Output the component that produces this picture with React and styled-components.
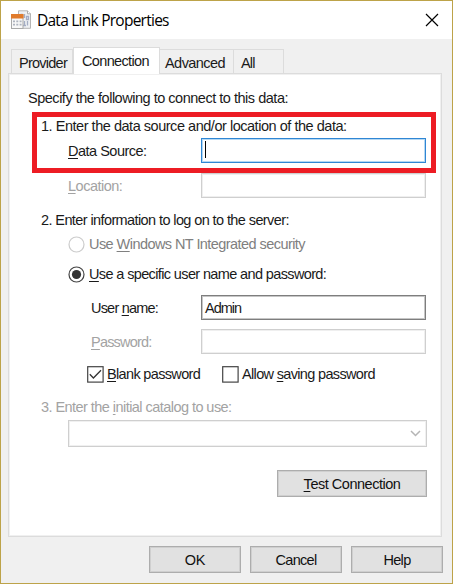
import React from 'react';
import styled, { createGlobalStyle } from 'styled-components';

const Global = createGlobalStyle`
  * { box-sizing: border-box; }
  body { margin: 0; background: #f0f0f0; }
`;

const Dialog = styled.div`
  position: relative;
  display: flex;
  flex-direction: column;
  width: 453px;
  height: 584px;
  border: 1px solid #bda349;
  background: #f0f0f0;
  color: #1a1a1a;
  font: 14.5px/18px 'Liberation Sans', Arial, sans-serif;
  overflow: hidden;
`;

const TitleBar = styled.header`
  display: flex;
  align-items: center;
  height: 38px;
  padding: 0 13px 0 10px;
  background: #fff;
`;

const Title = styled.h1`
  flex: 1;
  margin: -1px 0 0 5px;
  color: #000;
  font: 400 15.5px/22px 'Open Sans', 'Noto Sans', sans-serif;
  letter-spacing: -0.75px;
  white-space: nowrap;
`;

const CloseButton = styled.button`
  display: flex;
  padding: 0;
  border: 0;
  background: none;
`;

const TabList = styled.div`
  display: flex;
  align-items: flex-end;
  height: 26px;
  margin: 8px 0 0 10px;
`;

const Tab = styled.div`
  width: ${(p) => p.$width}px;
  height: ${(p) => (p.$active ? 27 : 24)}px;
  padding: 4px 0 0 ${(p) => p.$inset || 7}px;
  margin-bottom: ${(p) => (p.$active ? -1 : 0)}px;
  border: 1px solid #dcdcdc;
  border-bottom: 0;
  border-left-width: ${(p) => (p.$joined ? 0 : 1)}px;
  background: ${(p) => (p.$active ? '#fff' : '#f0f0f0')};
  z-index: ${(p) => (p.$active ? 1 : 0)};
`;

const Panel = styled.main`
  width: 434px;
  height: 464px;
  margin-left: 7px;
  border: 1px solid #dcdcdc;
  box-shadow: inset 0 0 0 1px #f0f0f0;
  background: #fff;
`;

const Row = styled.div`
  display: flex;
  align-items: center;
  height: ${(p) => p.$height || 18}px;
  margin-top: ${(p) => p.$gap || 0}px;
  padding-left: ${(p) => p.$indent}px;
`;

const Text = styled.span`
  display: block;
  flex: none;
  width: ${(p) => (p.$width ? `${p.$width}px` : 'auto')};
  color: ${(p) => p.$color || 'inherit'};
  letter-spacing: ${(p) => p.$track || 0}px;
  white-space: nowrap;
`;

const Key = styled.u`
  text-decoration-thickness: 1px;
  text-underline-offset: 2px;
`;

const fieldColors = {
  focus: ['#2f86d4', '#b5d8f3'],
  normal: ['#7e7e7e', '#c6c6c6'],
  disabled: ['#cfcfcf', '#efefef'],
};

const Field = styled.div`
  display: flex;
  align-items: center;
  width: 225px;
  height: 25px;
  padding: 0 3px;
  border: 1px solid ${(p) => fieldColors[p.$state][0]};
  box-shadow: inset 0 0 0 1px ${(p) => fieldColors[p.$state][1]};
  background: #fff;
`;

const Caret = styled.span`
  width: 1px;
  height: 17px;
  margin-top: -2px;
  background: #000;
`;

const Glyph = styled.svg`
  display: block;
  flex: none;
  margin-right: ${(p) => p.$after || 0}px;
`;

const Combo = styled.div`
  display: flex;
  align-items: center;
  justify-content: flex-end;
  width: 359px;
  height: 27px;
  padding-right: 5px;
  border: 1px solid #cfcfcf;
  box-shadow: inset 0 0 0 1px #f0f0f0;
`;

const Button = styled.button`
  display: flex;
  align-items: center;
  justify-content: center;
  width: ${(p) => p.$width || 92}px;
  height: 27px;
  padding: 0;
  border: 1px solid #adadad;
  box-shadow: inset 0 0 0 1px #cfcfcf;
  background: #e1e1e1;
  color: #111;
  font: inherit;
`;

const Footer = styled.footer`
  display: flex;
  justify-content: flex-end;
  gap: 9px;
  padding: 9px 9px 0 0;
`;

const Highlight = styled.div`
  position: absolute;
  left: 31px;
  top: 111px;
  width: 404px;
  height: 61px;
  border: 5px solid #ed1c24;
`;

function Radio({ checked }) {
  return (
    <Glyph width="17" height="17" viewBox="0 0 17 17" $after={4}>
      <circle cx="8.5" cy="8.5" r="7.5" fill="#fff" stroke={checked ? '#444' : '#ccc'} strokeWidth="1.2" />
      {checked && <circle cx="8.5" cy="8.5" r="4.6" fill="#333" />}
    </Glyph>
  );
}

function Checkbox({ checked }) {
  return (
    <Glyph width="17" height="17" viewBox="0 0 17 17" $after={3}>
      <rect x="0.7" y="0.7" width="15.4" height="15.4" fill="#fff" stroke="#444" strokeWidth="1.2" />
      {checked && <path d="M2.8 8.2 6.4 12 14 4.2" fill="none" stroke="#333" strokeWidth="1.3" />}
    </Glyph>
  );
}

function AppIcon() {
  return (
    <Glyph width="21" height="21" viewBox="0 0 21 21">
      <path d="M7.5 .8h9l3 3v14.5h-12z" fill="#eef0f3" stroke="#b5b5b5" />
      <path d="M16.5.8v3h3" fill="#fff" stroke="#aaa" />
      <path d="M9.5 4.5h2.2M13.5 4v4M15.5 6.5h2v3h-2zM13.5 11v5M16.5 11v4.5M12 15.5h3" fill="none" stroke="#a4adc4" strokeWidth="1.3" />
      <rect x=".5" y="5" width="11.5" height="13.5" fill="#f8f8f8" stroke="#a9a9a9" />
      <rect x="0" y="4" width="12.5" height="4.5" fill="#e07b2c" />
      <path d="M2 11.3h2M5.3 11.3h2M8.6 11.3h2M2 14.6h2M5.3 14.6h2M8.6 14.6h2" stroke="#aeb4bf" strokeWidth="1.8" />
    </Glyph>
  );
}

const FAINT = '#a3a3a3';

export default function App() {
  return (
    <Dialog>
      <Global />
      <TitleBar>
        <AppIcon />
        <Title>Data Link Properties</Title>
        <CloseButton aria-label="Close">
          <Glyph width="14" height="14" viewBox="0 0 14 14">
            <path d="M1 1 13 13M13 1 1 13" stroke="#000" strokeWidth="1.2" />
          </Glyph>
        </CloseButton>
      </TitleBar>
      <TabList>
        <Tab $width={62}><Text $track={-0.75}>Provider</Text></Tab>
        <Tab $width={87} $inset={8} $active><Text $track={-0.65}>Connection</Text></Tab>
        <Tab $width={74} $inset={5} $joined><Text $track={-0.55}>Advanced</Text></Tab>
        <Tab $width={50} $joined><Text $track={-0.8}>All</Text></Tab>
      </TabList>
      <Panel>
        <Row $gap={15} $indent={19}>
          <Text $track={-0.48}>Specify the following to connect to this data:</Text>
        </Row>
        <Row $gap={10} $indent={32}>
          <Text $track={-0.47}>1. Enter the data source and/or location of the data:</Text>
        </Row>
        <Row $gap={3} $indent={59} $height={25}>
          <Text $width={133} $track={-0.5}><Key>D</Key>ata Source:</Text>
          <Field $state="focus"><Caret /></Field>
        </Row>
        <Row $gap={10} $indent={59} $height={25}>
          <Text $width={133} $color={FAINT} $track={-0.5}><Key>L</Key>ocation:</Text>
          <Field $state="disabled" />
        </Row>
        <Row $gap={13} $indent={32}>
          <Text $track={-0.6}>2. Enter information to log on to the server:</Text>
        </Row>
        <Row $gap={6} $indent={59}>
          <Radio />
          <Text $color="#808080" $track={-0.56}>Use <Key>W</Key>indows NT Integrated security</Text>
        </Row>
        <Row $gap={12} $indent={59}>
          <Radio checked />
          <Text $track={-0.63}><Key>U</Key>se a specific user name and password:</Text>
        </Row>
        <Row $gap={12} $indent={82} $height={25}>
          <Text $width={110} $track={-0.8}>User <Key>n</Key>ame:</Text>
          <Field $state="normal"><Text $track={-1}>Admin</Text></Field>
        </Row>
        <Row $gap={9} $indent={82} $height={25}>
          <Text $width={110} $color={FAINT} $track={-0.8}><Key>P</Key>assword:</Text>
          <Field $state="disabled" />
        </Row>
        <Row $gap={11} $indent={78}>
          <Checkbox checked />
          <Text $width={115} $track={-0.66}><Key>B</Key>lank password</Text>
          <Checkbox />
          <Text $track={-0.66}>Allow <Key>s</Key>aving password</Text>
        </Row>
        <Row $gap={15} $indent={32}>
          <Text $color={FAINT} $track={-0.55}>3. Enter the <Key>i</Key>nitial catalog to use:</Text>
        </Row>
        <Row $gap={4} $indent={59} $height={27}>
          <Combo>
            <Glyph width="11" height="7" viewBox="0 0 11 7">
              <path d="M1 1 5.5 5.5 10 1" fill="none" stroke="#b5b5b5" strokeWidth="1.5" />
            </Glyph>
          </Combo>
        </Row>
        <Row $gap={23} $indent={268} $height={27}>
          <Button $width={150}><Text $track={-0.48}><Key>T</Key>est Connection</Text></Button>
        </Row>
      </Panel>
      <Footer>
        <Button><Text $track={-0.2}>OK</Text></Button>
        <Button><Text $track={-0.7}>Cancel</Text></Button>
        <Button><Text $track={-0.7}>Help</Text></Button>
      </Footer>
      <Highlight />
    </Dialog>
  );
}
